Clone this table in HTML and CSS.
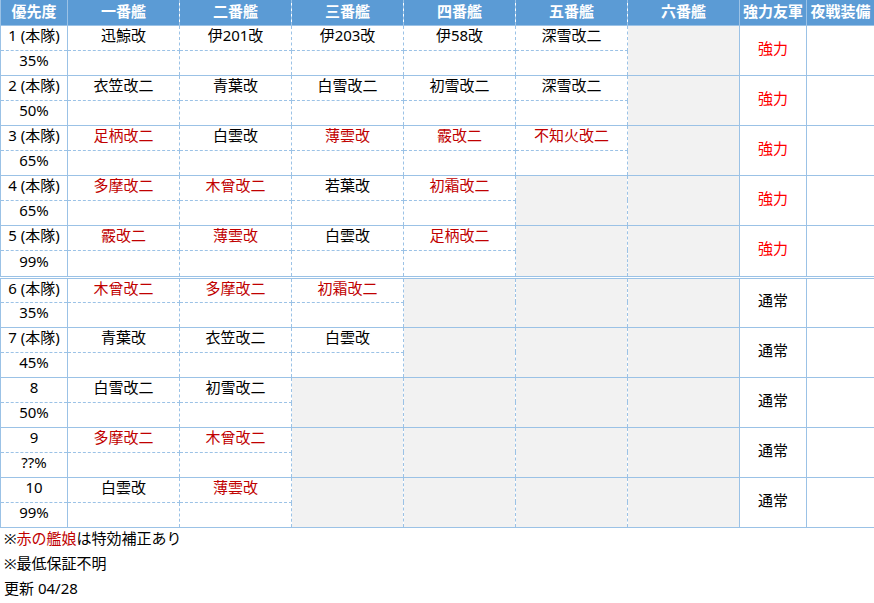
FILE: index.html
```html
<!DOCTYPE html>
<html lang="ja">
<head>
<meta charset="utf-8">
<link rel="stylesheet" href="styles.css">
</head>
<body>
<table class="fleet">
<colgroup>
<col class="c-pri"><col class="c-ship"><col class="c-ship"><col class="c-ship"><col class="c-ship"><col class="c-ship"><col class="c-ship"><col class="c-str"><col class="c-night">
</colgroup>
<thead>
<tr><th class="p">優先度</th><th class="s">一番艦</th><th class="s">二番艦</th><th class="s">三番艦</th><th class="s">四番艦</th><th class="s">五番艦</th><th class="s">六番艦</th><th>強力友軍</th><th>夜戦装備</th></tr>
</thead>
<tbody>
<tr class="top"><td class="p">1 (本隊)</td><td class="s">迅鯨改</td><td class="s">伊201改</td><td class="s">伊203改</td><td class="s">伊58改</td><td class="s">深雪改二</td><td class="s g" rowspan="2"></td><td class="str" rowspan="2">強力</td><td rowspan="2"></td></tr>
<tr class="bot"><td class="p">35%</td><td class="s"></td><td class="s"></td><td class="s"></td><td class="s"></td><td class="s"></td></tr>

<tr class="top"><td class="p">2 (本隊)</td><td class="s">衣笠改二</td><td class="s">青葉改</td><td class="s">白雪改二</td><td class="s">初雪改二</td><td class="s">深雪改二</td><td class="s g" rowspan="2"></td><td class="str" rowspan="2">強力</td><td rowspan="2"></td></tr>
<tr class="bot"><td class="p">50%</td><td class="s"></td><td class="s"></td><td class="s"></td><td class="s"></td><td class="s"></td></tr>

<tr class="top"><td class="p">3 (本隊)</td><td class="s r">足柄改二</td><td class="s">白雲改</td><td class="s r">薄雲改</td><td class="s r">霰改二</td><td class="s r">不知火改二</td><td class="s g" rowspan="2"></td><td class="str" rowspan="2">強力</td><td rowspan="2"></td></tr>
<tr class="bot"><td class="p">65%</td><td class="s"></td><td class="s"></td><td class="s"></td><td class="s"></td><td class="s"></td></tr>

<tr class="top"><td class="p">4 (本隊)</td><td class="s r">多摩改二</td><td class="s r">木曾改二</td><td class="s">若葉改</td><td class="s r">初霜改二</td><td class="s g" rowspan="2"></td><td class="s g" rowspan="2"></td><td class="str" rowspan="2">強力</td><td rowspan="2"></td></tr>
<tr class="bot"><td class="p">65%</td><td class="s"></td><td class="s"></td><td class="s"></td><td class="s"></td></tr>

<tr class="top"><td class="p">5 (本隊)</td><td class="s r">霰改二</td><td class="s r">薄雲改</td><td class="s">白雲改</td><td class="s r">足柄改二</td><td class="s g dbl" rowspan="2"></td><td class="s g dbl" rowspan="2"></td><td class="str dbl" rowspan="2">強力</td><td class="dbl" rowspan="2"></td></tr>
<tr class="bot sep"><td class="p">99%</td><td class="s"></td><td class="s"></td><td class="s"></td><td class="s"></td></tr>

<tr class="top"><td class="p">6 (本隊)</td><td class="s r">木曾改二</td><td class="s r">多摩改二</td><td class="s r">初霜改二</td><td class="s g" rowspan="2"></td><td class="s g" rowspan="2"></td><td class="s g" rowspan="2"></td><td rowspan="2">通常</td><td rowspan="2"></td></tr>
<tr class="bot"><td class="p">35%</td><td class="s"></td><td class="s"></td><td class="s"></td></tr>

<tr class="top"><td class="p">7 (本隊)</td><td class="s">青葉改</td><td class="s">衣笠改二</td><td class="s">白雲改</td><td class="s g" rowspan="2"></td><td class="s g" rowspan="2"></td><td class="s g" rowspan="2"></td><td rowspan="2">通常</td><td rowspan="2"></td></tr>
<tr class="bot"><td class="p">45%</td><td class="s"></td><td class="s"></td><td class="s"></td></tr>

<tr class="top"><td class="p">8</td><td class="s">白雪改二</td><td class="s">初雪改二</td><td class="s g" rowspan="2"></td><td class="s g" rowspan="2"></td><td class="s g" rowspan="2"></td><td class="s g" rowspan="2"></td><td rowspan="2">通常</td><td rowspan="2"></td></tr>
<tr class="bot"><td class="p">50%</td><td class="s"></td><td class="s"></td></tr>

<tr class="top"><td class="p">9</td><td class="s r">多摩改二</td><td class="s r">木曾改二</td><td class="s g" rowspan="2"></td><td class="s g" rowspan="2"></td><td class="s g" rowspan="2"></td><td class="s g" rowspan="2"></td><td rowspan="2">通常</td><td rowspan="2"></td></tr>
<tr class="bot"><td class="p">??%</td><td class="s"></td><td class="s"></td></tr>

<tr class="top"><td class="p">10</td><td class="s">白雲改</td><td class="s r">薄雲改</td><td class="s g" rowspan="2"></td><td class="s g" rowspan="2"></td><td class="s g" rowspan="2"></td><td class="s g" rowspan="2"></td><td rowspan="2">通常</td><td rowspan="2"></td></tr>
<tr class="bot"><td class="p">99%</td><td class="s"></td><td class="s"></td></tr>
</tbody>
</table>
<div class="notes">
<p>※<span class="red">赤の艦娘</span>は特効補正あり</p>
<p>※最低保証不明</p>
<p>更新 04/28</p>
</div>
</body>
</html>
```

FILE: styles.css
```css
html, body {
  margin: 0;
  padding: 0;
  background: #ffffff;
}
body {
  font-family: "Noto Sans", "Noto Sans CJK JP", sans-serif;
  font-size: 15px;
  color: #000;
}
.fleet {
  border-collapse: collapse;
  table-layout: fixed;
  width: 874px;
}
.c-pri { width: 67px; }
.c-ship { width: 112px; }
.c-str { width: 67px; }
.c-night { width: 68px; }

.fleet tr { height: 25px; }
.fleet th, .fleet td {
  border: 1px solid #9bc2e6;
  padding: 0 0 5px;
  text-align: center;
  vertical-align: middle;
  line-height: 18px;
  white-space: nowrap;
  overflow: hidden;
}
.fleet th {
  border-top: 0;
  background: #5b9bd5;
  color: #ffffff;
  font-weight: bold;
  padding: 0 0 2px;
}
.fleet .s {
  border-left-style: dashed;
  border-right-style: dashed;
}
.fleet .top td.p, .fleet .top td.s:not(.g) {
  border-bottom-style: dashed;
}
.fleet .bot td {
  border-top-style: dashed;
}
.fleet .g { background: #f2f2f2; }
.fleet .r { color: #c00000; }
.fleet .str { color: #ff0000; }
.fleet .sep td, .fleet .dbl {
  border-bottom: 3px double #9bc2e6;
}
.fleet tr.sep { height: 27px; }
.notes {
  margin-top: -2px;
}
.notes p {
  margin: 0;
  height: 25px;
  line-height: 25px;
  padding-left: 4px;
}
.notes .red { color: #c00000; }
```
